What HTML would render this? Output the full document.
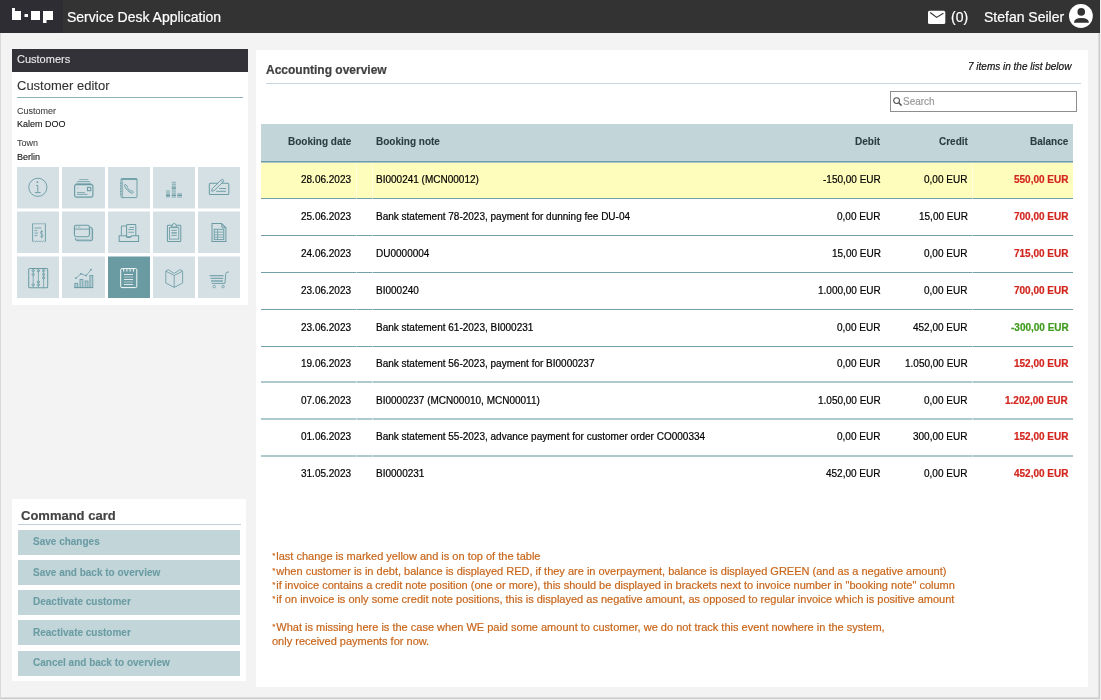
<!DOCTYPE html>
<html><head><meta charset="utf-8">
<style>
*{margin:0;padding:0;box-sizing:border-box}
html,body{width:1101px;height:700px;overflow:hidden}
body{background:#f3f3f3;font-family:"Liberation Sans",sans-serif;position:relative;color:#222}
.a{position:absolute}
.t{position:absolute;line-height:1;white-space:nowrap;will-change:transform;-webkit-text-stroke:0.2px currentColor}
#hdr{left:0;top:0;width:1100px;height:33px;background:#333333}
#logo{left:0;top:0;width:63px;height:33px;background:#2e2d34}
.w{background:#fff}
.tile{position:absolute;background:#d5e0e5;width:42px;height:42px}
.tile svg{position:absolute;left:0;top:0}
.btn{position:absolute;left:18px;width:222px;height:25px;background:#c2d5d9}
.btn span{will-change:transform;-webkit-text-stroke:0.1px currentColor;position:absolute;left:15px;top:6.5px;font-size:10px;font-weight:bold;color:#6a9ca3;line-height:1;white-space:nowrap}
.th{will-change:transform;-webkit-text-stroke:0.1px currentColor;position:absolute;top:136.5px;font-size:10px;font-weight:bold;color:#2b3d42;line-height:1;white-space:nowrap}
.c{will-change:transform;-webkit-text-stroke:0.2px currentColor;position:absolute;font-size:10px;line-height:1;white-space:nowrap;color:#000}
.r{text-align:right}
.line{position:absolute;left:261px;width:812px;height:1px;background:#729fa8}
.note{will-change:transform;-webkit-text-stroke:0.2px currentColor;position:absolute;left:272px;font-size:11px;line-height:14.15px;color:#c8661b;white-space:nowrap}
</style></head><body>
<!-- frame borders -->
<div class="a" style="left:0;top:33px;width:1px;height:667px;background:#d9d9d9"></div>
<div class="a" style="left:1098px;top:33px;width:1px;height:665px;background:#dcdcdc"></div>
<div class="a" style="left:1099px;top:33px;width:1px;height:666px;background:#cdcdcd"></div>
<div class="a" style="left:1100px;top:0;width:1px;height:700px;background:#eeeeee"></div>
<div class="a" style="left:0;top:697px;width:1099px;height:1px;background:#dcdcdc"></div>
<div class="a" style="left:0;top:698px;width:1100px;height:1px;background:#cdcdcd"></div>
<div class="a" style="left:0;top:699px;width:1101px;height:1px;background:#eeeeee"></div>

<div id="hdr" class="a"></div>
<div id="logo" class="a"></div>
<svg class="a" style="left:0;top:0" width="63" height="33">
<g fill="#fff">
<rect x="12" y="8" width="3" height="4"/>
<rect x="12" y="11" width="9" height="9"/>
<rect x="24.5" y="14" width="3.5" height="3"/>
<rect x="31" y="11" width="9" height="9"/>
<rect x="43" y="11" width="10" height="9"/>
<rect x="43" y="19" width="3.5" height="4"/>
</g></svg>
<div class="t" style="left:67.4px;top:10px;font-size:14px;color:#fff">Service Desk Application</div>
<svg class="a" style="left:927px;top:10px" width="20" height="16">
<rect x="1" y="0.8" width="17.3" height="13.2" rx="1.6" fill="#fff"/>
<path d="M3.2 2.6 L9.6 7.4 L16.4 3.3" stroke="#333" stroke-width="1.2" fill="none"/>
</svg>
<div class="t" style="left:950.8px;top:10px;font-size:14px;color:#fff">(0)</div>
<div class="t" style="left:984px;top:10px;font-size:14px;color:#fff">Stefan Seiler</div>
<svg class="a" style="left:1066px;top:2px" width="30" height="28">
<circle cx="14.9" cy="14" r="11.9" fill="#fff"/>
<circle cx="15.25" cy="9.9" r="3.8" fill="#333"/>
<path d="M8 20.75 Q8 16 15.4 16 Q22.9 16 22.9 20.75 Z" fill="#333"/>
</svg>

<!-- sidebar panel 1 -->
<div class="a w" style="left:12px;top:49px;width:236px;height:256px"></div>
<div class="a" style="left:12px;top:49px;width:236px;height:23px;background:#333238"></div>
<div class="t" style="left:17.2px;top:53.5px;-webkit-text-stroke:0.1px currentColor;font-size:11px;color:#eee">Customers</div>
<div class="t" style="left:17px;top:78.9px;-webkit-text-stroke:0.1px currentColor;font-size:13px;color:#333">Customer editor</div>
<div class="a" style="left:17px;top:97px;width:226px;height:1px;background:#8db3ba"></div>
<div class="t" style="left:17px;top:106.5px;-webkit-text-stroke:0.1px currentColor;font-size:9px;color:#444">Customer</div>
<div class="t" style="left:17px;top:120px;-webkit-text-stroke:0.1px currentColor;font-size:9px;color:#111">Kalem DOO</div>
<div class="t" style="left:17px;top:139.2px;-webkit-text-stroke:0.1px currentColor;font-size:9px;color:#444">Town</div>
<div class="t" style="left:17px;top:152.8px;-webkit-text-stroke:0.1px currentColor;font-size:9px;color:#111">Berlin</div>
<div id="tiles">
<svg class="a" style="left:0;top:0" width="260" height="310" viewBox="0 0 260 310">
<rect x="17" y="167" width="42" height="41.5" fill="#d5e0e5"/>
<rect x="62" y="167" width="43" height="41.5" fill="#d5e0e5"/>
<rect x="108" y="167" width="42" height="41.5" fill="#d5e0e5"/>
<rect x="153" y="167" width="42" height="41.5" fill="#d5e0e5"/>
<rect x="198" y="167" width="42" height="41.5" fill="#d5e0e5"/>
<rect x="17" y="211.5" width="42" height="41.5" fill="#d5e0e5"/>
<rect x="62" y="211.5" width="43" height="41.5" fill="#d5e0e5"/>
<rect x="108" y="211.5" width="42" height="41.5" fill="#d5e0e5"/>
<rect x="153" y="211.5" width="42" height="41.5" fill="#d5e0e5"/>
<rect x="198" y="211.5" width="42" height="41.5" fill="#d5e0e5"/>
<rect x="17" y="256.5" width="42" height="41.5" fill="#d5e0e5"/>
<rect x="62" y="256.5" width="43" height="41.5" fill="#d5e0e5"/>
<rect x="108" y="256.5" width="42" height="41.5" fill="#6a9ba2"/>
<rect x="153" y="256.5" width="42" height="41.5" fill="#d5e0e5"/>
<rect x="198" y="256.5" width="42" height="41.5" fill="#d5e0e5"/>
<g fill="none" stroke="#6b9ca4" stroke-width="0.94" stroke-linecap="butt">
<circle cx="37.85" cy="187.3" r="9.1"/>
<circle cx="37.4" cy="182.2" r="0.85" fill="#6b9ca4" stroke="none"/>
<path d="M36 185.4 H37.8 V192.6 M35 192.6 H40.6"/>
<path d="M79.2 179.5 H88.2" stroke-width="0.94" opacity="0.75"/>
<path d="M77.3 181.5 H89.9" stroke-width="1.02" opacity="0.8"/>
<path d="M75.8 183.4 H91.3" stroke-width="1.10" opacity="0.7"/>
<rect x="74.6" y="184.6" width="18.3" height="12.5" rx="1.5" stroke-width="1.19"/>
<rect x="87.5" y="187.4" width="3.2" height="3.3" stroke-width="1.10"/>
<circle cx="78" cy="188.1" r="0.6" fill="#6b9ca4" stroke="none" opacity="0.6"/>
<path d="M77 192.6 H84.9 M77 194.4 H87.6" stroke-width="0.94" opacity="0.85"/>
<rect x="121" y="178.6" width="16" height="19" rx="1" stroke-width="0.94"/>
<path d="M121.3 179.2 H137.2" stroke-width="1.36"/>
<path d="M122.6 180.4 V197.3" stroke-width="0.68"/>
<path d="M120 183.3 H121.6 M120 186 H121.6 M120 188.7 H121.6 M120 191.4 H121.6 M120 194.1 H121.6" stroke-width="0.85"/>
<path d="M125.2 184.3 Q124 185.5 125.2 187.6 Q127.5 191 131 193 Q133 193.6 133.6 192.2 L132.2 190.8 Q131.3 190.6 130.9 191.3 Q129 190.2 127.2 187.6 Q127.7 187 127.4 186.3 Z" stroke-width="0.94"/>
</g>
<g fill="#6b9ca4">
<rect x="166" y="190.30" width="4" height="1.40" opacity="0.6"/>
<rect x="166" y="192.20" width="4" height="1.40" opacity="0.6"/>
<rect x="166" y="194.10" width="4" height="1.40" opacity="0.6"/>
<rect x="166" y="196.00" width="4" height="1.40" opacity="0.6"/>
<rect x="171.8" y="181.70" width="4.1" height="1.40" opacity="0.6"/>
<rect x="171.8" y="183.60" width="4.1" height="1.40" opacity="0.6"/>
<rect x="171.8" y="185.50" width="4.1" height="1.40" opacity="0.6"/>
<rect x="171.8" y="187.40" width="4.1" height="1.40" opacity="0.6"/>
<rect x="171.8" y="189.30" width="4.1" height="1.40" opacity="0.6"/>
<rect x="171.8" y="191.20" width="4.1" height="1.40" opacity="0.6"/>
<rect x="171.8" y="193.10" width="4.1" height="1.40" opacity="0.6"/>
<rect x="171.8" y="195.00" width="4.1" height="1.40" opacity="0.6"/>
<rect x="171.8" y="196.90" width="4.1" height="0.80" opacity="0.6"/>
<rect x="177.3" y="193.20" width="4.7" height="1.40" opacity="0.6"/>
<rect x="177.3" y="195.10" width="4.7" height="1.40" opacity="0.6"/>
<rect x="177.3" y="197.00" width="4.7" height="0.70" opacity="0.6"/>
<rect x="171.8" y="187.4" width="4.1" height="1.3"/><rect x="166" y="194.7" width="4" height="1.4"/><rect x="171.8" y="194.7" width="4.1" height="1.4"/><rect x="177.3" y="194.7" width="4.7" height="1.4"/>
</g>
<g fill="none" stroke="#6b9ca4" stroke-width="0.94">
<rect x="209.3" y="183.3" width="19.5" height="11.3" rx="1.2" stroke-width="1.02"/>
<path d="M219.3 188.5 H226 M216.2 191.3 H226" stroke-width="0.94"/>
<path d="M211.6 191.2 L212.2 188.8 L221.3 179.8 Q222.3 178.9 223.3 179.8 Q224.1 180.7 223.3 181.7 L214.2 190.6 Z" fill="#d5e0e5" stroke-width="0.94"/>
<path d="M220.8 180.3 L222.8 182.3" stroke-width="0.85"/>
<path d="M32.6 223.5 V241.5 M45.4 223.5 V241.5" stroke-width="0.94"/>
<path d="M32.6 224.2 l1.07 -0.9 l1.07 0.9 l1.07 -0.9 l1.07 0.9 l1.07 -0.9 l1.07 0.9 l1.07 -0.9 l1.07 0.9 l1.07 -0.9 l1.07 0.9 l1.07 -0.9 l1.07 0.9" stroke-width="0.68"/>
<path d="M32.6 240.9 l1.07 0.9 l1.07 -0.9 l1.07 0.9 l1.07 -0.9 l1.07 0.9 l1.07 -0.9 l1.07 0.9 l1.07 -0.9 l1.07 0.9 l1.07 -0.9 l1.07 0.9 l1.07 -0.9" stroke-width="0.68"/>
<path d="M34.5 228 H41.5" stroke-width="1.10" opacity="0.8"/>
<path d="M34.5 230.6 H37.3 M34.5 233.1 H38 M34.5 235.6 H37.3" stroke-width="0.85"/>
<path d="M43 232.1 Q42.3 231.2 41.5 231.3 Q40.3 231.5 40.4 232.8 Q40.6 233.8 41.8 234.1 Q43.1 234.5 43.1 235.6 Q43 236.8 41.7 236.9 Q40.8 236.9 40.2 236 M41.7 230 V238.4" stroke-width="0.77"/>
<path d="M89.5 226.9 Q92.6 227.2 92.6 230.4 V238.2 Q92.6 240.8 90 240.8 H78.6 Q75.6 240.8 75.3 238" stroke-width="1.02"/>
<path d="M91.2 228.6 V237.6 Q91.2 239.4 89.5 239.4 H77" stroke-width="0.68" opacity="0.7"/>
<rect x="74.4" y="225.3" width="15" height="11.4" rx="1.9" fill="#d5e0e5" stroke-width="1.10"/>
<path d="M74.6 229.1 H89.2" stroke-width="0.94"/>
<path d="M76.3 227.1 H77.1 M78.2 227.1 H80.4" stroke-width="0.68"/>
<path d="M121.4 235.3 V226 H126.4" stroke-width="0.94"/>
<rect x="126.6" y="224.4" width="9.2" height="12.4" rx="0.8" fill="#d5e0e5" stroke-width="1.02"/>
<path d="M129.5 227.4 H134 M128.3 229.5 H134 M128.3 232.3 H134" stroke-width="1.02" opacity="0.85"/>
<path d="M119.2 235.7 H125.8 Q126.6 237.6 128.8 237.6 Q131 237.6 131.8 235.7 H138.6 V241.6 H119.2 Z" fill="#d5e0e5" stroke-width="1.02"/>
<rect x="167.4" y="225.3" width="13.4" height="16.3" rx="0.8" stroke-width="1.02"/>
<rect x="169.4" y="227.7" width="9.4" height="11.4" stroke-width="0.85"/>
<path d="M171.3 227 L172.2 225.3 Q172.8 223.4 174.2 223.4 Q175.6 223.4 176.2 225.3 L177.1 227 Z" fill="#d5e0e5" stroke-width="0.94"/>
<path d="M171.4 230.4 H176.8 M171.4 235.4 H176.8" stroke-width="0.85"/>
<path d="M171.4 232.9 H176.8" stroke-width="1.27"/>
<path d="M212 223.5 H221.6 L225.9 227.8 V241.6 H212 Z" stroke-width="1.02"/>
<path d="M221.6 223.5 V226.3 Q221.6 227.8 223.1 227.8 H225.9" fill="#6b9ca4" fill-opacity="0.35" stroke-width="0.85"/>
<rect x="214.2" y="229.3" width="9.6" height="10.3" stroke-width="0.94"/>
<path d="M217.6 229.3 V239.6 M214.2 232.1 H223.8 M214.2 234.8 H223.8 M214.2 237.2 H223.8" stroke-width="0.77"/>
<rect x="28.7" y="268.6" width="19" height="19.1" rx="1" stroke-width="1.02"/>
<path d="M33.2 268.8 V287.5 M38.4 268.8 V287.5 M43.6 268.8 V287.5" stroke-width="0.77"/>
<path d="M31.6 270.6 L33.2 269.3 L34.800000000000004 270.6 L33.2 271.90000000000003 Z" stroke-width="0.77"/>
<path d="M31.6 274.5 L33.2 273.2 L34.800000000000004 274.5 L33.2 275.8 Z" stroke-width="0.77"/>
<path d="M31.6 284.8 L33.2 283.5 L34.800000000000004 284.8 L33.2 286.1 Z" stroke-width="0.77"/>
<path d="M36.8 270.8 L38.4 269.5 L40.0 270.8 L38.4 272.1 Z" stroke-width="0.77"/>
<path d="M36.8 282 L38.4 280.7 L40.0 282 L38.4 283.3 Z" stroke-width="0.77"/>
<path d="M36.8 284.8 L38.4 283.5 L40.0 284.8 L38.4 286.1 Z" stroke-width="0.77"/>
<path d="M42.0 270.6 L43.6 269.3 L45.2 270.6 L43.6 271.90000000000003 Z" stroke-width="0.77"/>
<path d="M42.0 274.5 L43.6 273.2 L45.2 274.5 L43.6 275.8 Z" stroke-width="0.77"/>
<path d="M42.0 277.9 L43.6 276.59999999999997 L45.2 277.9 L43.6 279.2 Z" stroke-width="0.77"/>
<path d="M74 287.6 H93" stroke-width="1.02"/>
<g fill="#6b9ca4" fill-opacity="0.3">
<rect x="74.9" y="283.3" width="2.9" height="4.3" stroke-width="0.85"/><rect x="80" y="279.4" width="2.9" height="8.2" stroke-width="0.85"/><rect x="85.1" y="281" width="2.9" height="6.6" stroke-width="0.85"/><rect x="89.9" y="275.5" width="2.9" height="12.1" stroke-width="0.85"/>
</g>
<path d="M75.9 278.1 L81 273.8 L86.1 275.6 L91 269.7" stroke-width="0.77"/>
<g fill="#6b9ca4" stroke="none"><circle cx="75.9" cy="278.1" r="0.9"/><circle cx="81" cy="273.8" r="0.9"/><circle cx="86.1" cy="275.6" r="0.9"/><circle cx="91" cy="269.7" r="0.9"/></g>
<path d="M165.8 283 V271.2 L168.2 269.6 L174.2 273.4 L180.2 269.6 L182.6 271.2 V283 L174.2 287.4 Z M165.8 271.2 L174.2 275.4 L182.6 271.2 M174.2 275.4 V287.4" stroke-width="0.85" stroke-linejoin="round"/>
<path d="M228.9 272 Q226.4 271.6 225.8 273.3 L224.9 283.4 H211.6" stroke-width="0.94"/>
<path d="M209.6 275.7 H223.6" stroke-width="1.10"/>
<path d="M210.6 278.4 H223.2 M211 281 H223" stroke-width="1.36" opacity="0.85"/>
<circle cx="214.2" cy="286.6" r="1.3" stroke-width="0.77"/><circle cx="223" cy="286.6" r="1.3" stroke-width="0.77"/>
</g>
<g fill="none" stroke="#fff">
<rect x="120.7" y="268.6" width="16.1" height="19" rx="1.2" stroke-width="0.94"/>
<path d="M123.7 268.9 V271.6 M126.9 268.9 V271.6 M130.1 268.9 V271.6 M133.4 268.9 V271.6" stroke-width="0.94"/>
<path d="M124 274.5 H133 M124 279.5 H133 M124 284.5 H133" stroke-width="0.77"/>
<path d="M124 277 H133 M124 282 H133" stroke-width="0.77" opacity="0.55"/>
</g>
</svg>
</div>

<!-- command card -->
<div class="a w" style="left:12px;top:499px;width:234px;height:182px"></div>
<div class="t" style="left:21.4px;top:509px;font-size:13px;font-weight:bold;color:#444">Command card</div>
<div class="a" style="left:18px;top:524px;width:223px;height:1px;background:#bcd2d6"></div>
<div class="btn" style="top:530px"><span>Save changes</span></div>
<div class="btn" style="top:560px"><span style="top:8px">Save and back to overview</span></div>
<div class="btn" style="top:590px"><span>Deactivate customer</span></div>
<div class="btn" style="top:620px"><span style="top:8px">Reactivate customer</span></div>
<div class="btn" style="top:651px"><span style="top:7px">Cancel and back to overview</span></div>

<!-- main panel -->
<div class="a w" style="left:256px;top:50px;width:832px;height:637px"></div>
<!--MAIN-->
<div class="t" style="left:266.4px;top:64.1px;font-size:12px;font-weight:bold;color:#404040">Accounting overview</div>
<div class="t" style="right:29.2px;top:61.5px;font-size:10px;font-style:italic;color:#111">7 items in the list below</div>
<div class="a" style="left:266px;top:83px;width:815px;height:1px;background:#c3d8dc"></div>
<div class="a" style="left:890px;top:91px;width:187px;height:21px;border:1px solid #8e8e8e;background:#fff"></div>
<svg class="a" style="left:892px;top:96px" width="12" height="12"><circle cx="4.6" cy="4.6" r="2.9" stroke="#555" stroke-width="1.1" fill="none"/><path d="M6.7 6.7 L9.6 9.6" stroke="#555" stroke-width="1.5"/></svg>
<div class="t" style="left:903px;top:96.5px;font-size:10px;color:#9a9a9a">Search</div>
<div class="a" style="left:261px;top:124px;width:812px;height:37px;background:#c2d5d9"></div>
<div class="a" style="left:261px;top:161px;width:812px;height:1px;background:#6f9ca5"></div>
<div class="a" style="left:261px;top:162px;width:812px;height:1px;background:#a9c6cb"></div>
<div class="th" style="right:749.5px">Booking date</div>
<div class="th" style="left:376.3px">Booking note</div>
<div class="th" style="right:221.29999999999995px">Debit</div>
<div class="th" style="right:133.20000000000005px">Credit</div>
<div class="th" style="right:32.700000000000045px">Balance</div>
<div class="a" style="left:261px;top:163px;width:812px;height:35px;background:#fffdbb"></div>
<div class="line" style="top:198px"></div>
<div class="line" style="top:235px"></div>
<div class="line" style="top:272px"></div>
<div class="line" style="top:309px"></div>
<div class="line" style="top:346px"></div>
<div class="line" style="top:381px;height:2px;background:#adc9ce"></div>
<div class="line" style="top:418px;height:2px;background:#adc9ce"></div>
<div class="line" style="top:455px;height:2px;background:#adc9ce"></div>
<div class="a" style="left:356px;top:163px;width:1px;height:330px;background:rgba(255,255,255,0.5)"></div>
<div class="a" style="left:372px;top:163px;width:1px;height:330px;background:rgba(255,255,255,0.5)"></div>
<div class="a" style="left:972px;top:163px;width:1px;height:330px;background:rgba(255,255,255,0.5)"></div>
<div class="c" style="right:749.5px;top:174.5px">28.06.2023</div>
<div class="c" style="left:376px;top:174.5px">BI000241 (MCN00012)</div>
<div class="c" style="right:220.5px;top:174.5px">-150,00 EUR</div>
<div class="c" style="right:133.5px;top:174.5px">0,00 EUR</div>
<div class="c" style="right:32.700000000000045px;top:174.5px;font-weight:bold;color:#d3261f">550,00 EUR</div>
<div class="c" style="right:749.5px;top:211.5px">25.06.2023</div>
<div class="c" style="left:376px;top:211.5px">Bank statement 78-2023, payment for dunning fee DU-04</div>
<div class="c" style="right:220.5px;top:211.5px">0,00 EUR</div>
<div class="c" style="right:133.5px;top:211.5px">15,00 EUR</div>
<div class="c" style="right:32.700000000000045px;top:211.5px;font-weight:bold;color:#d3261f">700,00 EUR</div>
<div class="c" style="right:749.5px;top:249px">24.06.2023</div>
<div class="c" style="left:376px;top:249px">DU0000004</div>
<div class="c" style="right:220.5px;top:249px">15,00 EUR</div>
<div class="c" style="right:133.5px;top:249px">0,00 EUR</div>
<div class="c" style="right:32.700000000000045px;top:249px;font-weight:bold;color:#d3261f">715,00 EUR</div>
<div class="c" style="right:749.5px;top:286px">23.06.2023</div>
<div class="c" style="left:376px;top:286px">BI000240</div>
<div class="c" style="right:220.5px;top:286px">1.000,00 EUR</div>
<div class="c" style="right:133.5px;top:286px">0,00 EUR</div>
<div class="c" style="right:32.700000000000045px;top:286px;font-weight:bold;color:#d3261f">700,00 EUR</div>
<div class="c" style="right:749.5px;top:322.5px">23.06.2023</div>
<div class="c" style="left:376px;top:322.5px">Bank statement 61-2023, BI000231</div>
<div class="c" style="right:220.5px;top:322.5px">0,00 EUR</div>
<div class="c" style="right:133.5px;top:322.5px">452,00 EUR</div>
<div class="c" style="right:32.700000000000045px;top:322.5px;font-weight:bold;color:#3f9a1d">-300,00 EUR</div>
<div class="c" style="right:749.5px;top:358.5px">19.06.2023</div>
<div class="c" style="left:376px;top:358.5px">Bank statement 56-2023, payment for BI0000237</div>
<div class="c" style="right:220.5px;top:358.5px">0,00 EUR</div>
<div class="c" style="right:133.5px;top:358.5px">1.050,00 EUR</div>
<div class="c" style="right:32.700000000000045px;top:358.5px;font-weight:bold;color:#d3261f">152,00 EUR</div>
<div class="c" style="right:749.5px;top:395.5px">07.06.2023</div>
<div class="c" style="left:376px;top:395.5px">BI0000237 (MCN00010, MCN00011)</div>
<div class="c" style="right:220.5px;top:395.5px">1.050,00 EUR</div>
<div class="c" style="right:133.5px;top:395.5px">0,00 EUR</div>
<div class="c" style="right:32.700000000000045px;top:395.5px;font-weight:bold;color:#d3261f">1.202,00 EUR</div>
<div class="c" style="right:749.5px;top:431.5px">01.06.2023</div>
<div class="c" style="left:376px;top:431.5px">Bank statement 55-2023, advance payment for customer order CO000334</div>
<div class="c" style="right:220.5px;top:431.5px">0,00 EUR</div>
<div class="c" style="right:133.5px;top:431.5px">300,00 EUR</div>
<div class="c" style="right:32.700000000000045px;top:431.5px;font-weight:bold;color:#d3261f">152,00 EUR</div>
<div class="c" style="right:749.5px;top:468.5px">31.05.2023</div>
<div class="c" style="left:376px;top:468.5px">BI0000231</div>
<div class="c" style="right:220.5px;top:468.5px">452,00 EUR</div>
<div class="c" style="right:133.5px;top:468.5px">0,00 EUR</div>
<div class="c" style="right:32.700000000000045px;top:468.5px;font-weight:bold;color:#d3261f">452,00 EUR</div>
<div class="note" style="top:550.90px;line-height:1"><span style="display:inline-block;transform:translate(-0.4px,-0.8px) scale(0.72)">*</span>last change is marked yellow and is on top of the table</div>
<div class="note" style="top:565.60px;line-height:1"><span style="display:inline-block;transform:translate(-0.4px,-0.8px) scale(0.72)">*</span>when customer is in debt, balance is displayed RED, if they are in overpayment, balance is displayed GREEN (and as a negative amount)</div>
<div class="note" style="top:579.80px;line-height:1"><span style="display:inline-block;transform:translate(-0.4px,-0.8px) scale(0.72)">*</span>if invoice contains a credit note position (one or more), this should be displayed in brackets next to invoice number in "booking note" column</div>
<div class="note" style="top:594.00px;line-height:1"><span style="display:inline-block;transform:translate(-0.4px,-0.8px) scale(0.72)">*</span>if on invoice is only some credit note positions, this is displayed as negative amount, as opposed to regular invoice which is positive amount</div>
<div class="note" style="top:621.90px;line-height:1"><span style="display:inline-block;transform:translate(-0.4px,-0.8px) scale(0.72)">*</span>What is missing here is the case when WE paid some amount to customer, we do not track this event nowhere in the system,</div>
<div class="note" style="top:635.80px;line-height:1">only received payments for now.</div>
<!--/MAIN-->
</body></html>
